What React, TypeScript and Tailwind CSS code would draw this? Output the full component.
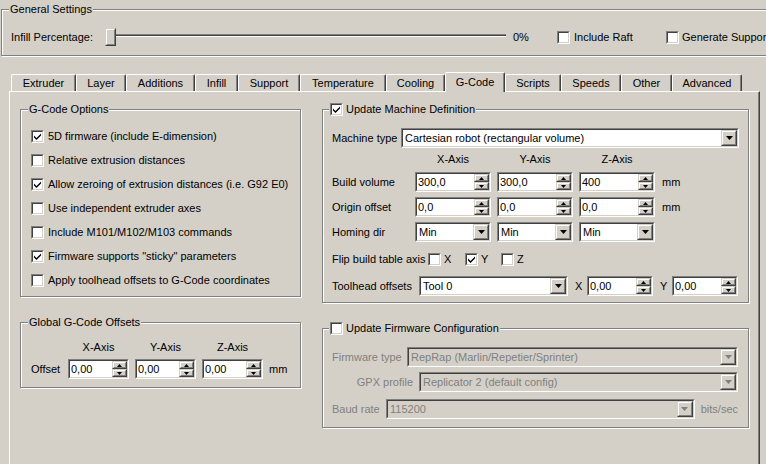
import React from 'react';

interface BoxProps {
  className?: string;
  inner?: string;
  children?: React.ReactNode;
}

function Sunken({ className = '', inner = 'bg-white', children }: BoxProps) {
  return (
    <div className={`border border-t-[#808080] border-l-[#808080] border-b-white border-r-white ${className}`}>
      <div className={`flex h-full w-full items-center border border-t-[#404040] border-l-[#404040] border-b-[#d4d0c8] border-r-[#d4d0c8] ${inner}`}>
        {children}
      </div>
    </div>
  );
}

function Raised({ className = '', children }: BoxProps) {
  return (
    <div className={`border border-t-[#d4d0c8] border-l-[#d4d0c8] border-b-[#404040] border-r-[#404040] ${className}`}>
      <div className="flex h-full w-full items-center justify-center overflow-hidden border border-t-white border-l-white border-b-[#808080] border-r-[#808080] bg-[#d4d0c8]">
        {children}
      </div>
    </div>
  );
}

function CheckBox({ checked = false }: { checked?: boolean }) {
  return (
    <Sunken className="h-[13px] w-[13px] shrink-0" inner="bg-white justify-center">
      {checked && (
        <svg width="7" height="7" viewBox="0 0 7 7">
          <path d="M0 2.5 L2.5 5 L7 0.5 L7 2.5 L2.5 7 L0 4.5 Z" fill="#000" />
        </svg>
      )}
    </Sunken>
  );
}

function Arrow({ up = false, color = '#000' }: { up?: boolean; color?: string }) {
  return up ? (
    <svg width="5" height="3" viewBox="0 0 5 3">
      <path d="M2.5 0 L5 3 L0 3 Z" fill={color} />
    </svg>
  ) : (
    <svg width="5" height="3" viewBox="0 0 5 3">
      <path d="M0 0 L5 0 L2.5 3 Z" fill={color} />
    </svg>
  );
}

function Spin({ value, className = '' }: { value: string; className?: string }) {
  return (
    <Sunken className={`h-[20px] shrink-0 ${className}`}>
      <span className="flex-1 pl-[1px]">{value}</span>
      <div className="flex h-full w-[15px] flex-col">
        <Raised className="min-h-0 flex-1">
          <Arrow up />
        </Raised>
        <Raised className="min-h-0 flex-1">
          <Arrow />
        </Raised>
      </div>
    </Sunken>
  );
}

function Combo({ value, className = '', disabled = false }: { value: string; className?: string; disabled?: boolean }) {
  return (
    <Sunken className={`h-[20px] ${className}`} inner={disabled ? 'bg-[#d4d0c8]' : 'bg-white'}>
      <span className={`flex-1 truncate pl-[2px] ${disabled ? 'text-[#808080]' : ''}`}>{value}</span>
      <Raised className="h-full w-[16px]">
        <svg width="7" height="4" viewBox="0 0 7 4">
          <path d="M0 0 L7 0 L3.5 4 Z" fill={disabled ? '#808080' : '#000'} />
        </svg>
      </Raised>
    </Sunken>
  );
}

function Group({ title, className = '', children }: { title: React.ReactNode; className?: string; children?: React.ReactNode }) {
  return (
    <div className={`relative border border-[#808080] shadow-[inset_1px_1px_0_#fff,1px_1px_0_#fff] ${className}`}>
      <div className="absolute -top-[8px] left-[7px] flex items-center gap-[3px] bg-[#d4d0c8] px-[1px] leading-[14px]">
        {title}
      </div>
      {children}
    </div>
  );
}

const tabs = [
  { label: 'Extruder', w: 'w-[65px]' },
  { label: 'Layer', w: 'w-[50px]' },
  { label: 'Additions', w: 'w-[69px]' },
  { label: 'Infill', w: 'w-[43px]' },
  { label: 'Support', w: 'w-[62px]' },
  { label: 'Temperature', w: 'w-[86px]' },
  { label: 'Cooling', w: 'w-[59px]' },
  { label: 'G-Code', w: 'w-[60px]', active: true },
  { label: 'Scripts', w: 'w-[56px]' },
  { label: 'Speeds', w: 'w-[60px]' },
  { label: 'Other', w: 'w-[51px]' },
  { label: 'Advanced', w: 'w-[70px]' },
];

const gcodeOptions = [
  { label: '5D firmware (include E-dimension)', checked: true },
  { label: 'Relative extrusion distances', checked: false },
  { label: 'Allow zeroing of extrusion distances (i.e. G92 E0)', checked: true },
  { label: 'Use independent extruder axes', checked: false },
  { label: 'Include M101/M102/M103 commands', checked: false },
  { label: 'Firmware supports "sticky" parameters', checked: true },
  { label: 'Apply toolhead offsets to G-Code coordinates', checked: false },
];

export default function App() {
  return (
    <div className="flex h-[464px] w-[766px] flex-col overflow-hidden bg-[#d4d0c8] pt-[9px] font-['Liberation_Sans',Arial,sans-serif] text-[11px] leading-[13px] text-black">
      {/* General settings */}
      <Group title="General Settings" className="ml-[1px] h-[47px] w-[800px] shrink-0">
        <div className="mt-[17px] flex h-[20px] items-center pl-[9px]">
          <span className="w-[94px]">Infill Percentage:</span>
          <div className="relative h-[18px] w-[401px]">
            <div className="absolute left-[2px] right-0 top-[6px] h-[3px] border-t border-b border-t-[#808080] border-b-white bg-[#404040]" />
            <Raised className="absolute left-0 top-0 h-[18px] w-[11px]" />
          </div>
          <span className="ml-[7px] w-[44px]">0%</span>
          <CheckBox />
          <span className="ml-[4px] w-[92px]">Include Raft</span>
          <CheckBox />
          <span className="ml-[3px] whitespace-nowrap">Generate Support</span>
        </div>
      </Group>

      {/* Tabs */}
      <div className="ml-[9px] mt-[16px] flex h-[19px] shrink-0 items-end pl-[2px]">
        {tabs.map((t) =>
          t.active ? (
            <div
              key={t.label}
              className={`${t.w} relative z-10 -mb-[1px] flex h-[20px] items-start justify-center rounded-t-[2px] border-t border-l border-r border-t-white border-l-white border-r-[#404040] bg-[#d4d0c8] pt-[3px] shadow-[inset_-1px_0_0_#808080]`}
            >
              {t.label}
            </div>
          ) : (
            <div
              key={t.label}
              className={`${t.w} flex h-[17px] items-center justify-center rounded-t-[2px] border-t border-l border-r border-t-white border-l-white border-r-[#404040] shadow-[inset_-1px_0_0_#808080]`}
            >
              {t.label}
            </div>
          )
        )}
      </div>

      <div className="ml-[9px] flex w-[751px] flex-1 border-t border-l border-r border-t-white border-l-white border-r-[#404040] pl-[10px] pt-[17px] shadow-[inset_-1px_0_0_#808080]">
        {/* Left column */}
        <div className="flex w-[281px] flex-col">
          <Group title="G-Code Options" className="h-[188px]">
            <div className="flex flex-col pl-[10px] pt-[14px]">
              {gcodeOptions.map((o) => (
                <div key={o.label} className="flex h-[24px] items-center gap-[4px]">
                  <CheckBox checked={o.checked} />
                  <span>{o.label}</span>
                </div>
              ))}
            </div>
          </Group>

          <Group title="Global G-Code Offsets" className="mt-[25px] h-[66px]">
            <div className="pl-[10px] pt-[17px]">
              <div className="flex h-[14px] items-center">
                <span className="w-[37px]" />
                <span className="w-[61px] text-center">X-Axis</span>
                <span className="ml-[6px] w-[61px] text-center">Y-Axis</span>
                <span className="ml-[6px] w-[61px] text-center">Z-Axis</span>
              </div>
              <div className="mt-[5px] flex h-[20px] items-center">
                <span className="w-[37px]">Offset</span>
                <Spin value="0,00" className="w-[61px]" />
                <Spin value="0,00" className="ml-[6px] w-[61px]" />
                <Spin value="0,00" className="ml-[6px] w-[61px]" />
                <span className="ml-[6px]">mm</span>
              </div>
            </div>
          </Group>
        </div>

        {/* Right column */}
        <div className="ml-[21px] flex w-[427px] flex-col">
          <Group
            title={
              <>
                <CheckBox checked />
                <span>Update Machine Definition</span>
              </>
            }
            className="h-[194px] [&>div:first-child]:left-[6px]"
          >
            <div className="flex flex-col pl-[9px] pr-[9px] pt-[18px]">
              <div className="flex h-[20px] items-center">
                <span className="w-[69px] shrink-0">Machine type</span>
                <Combo value="Cartesian robot (rectangular volume)" className="flex-1" />
              </div>
              <div className="mt-[4px] flex h-[14px] items-center">
                <span className="w-[83px]" />
                <span className="w-[76px] text-center">X-Axis</span>
                <span className="ml-[6px] w-[76px] text-center">Y-Axis</span>
                <span className="ml-[6px] w-[76px] text-center">Z-Axis</span>
              </div>
              <div className="mt-[6px] flex h-[20px] items-center">
                <span className="w-[83px]">Build volume</span>
                <Spin value="300,0" className="w-[76px]" />
                <Spin value="300,0" className="ml-[6px] w-[76px]" />
                <Spin value="400" className="ml-[6px] w-[76px]" />
                <span className="ml-[7px]">mm</span>
              </div>
              <div className="mt-[5px] flex h-[20px] items-center">
                <span className="w-[83px]">Origin offset</span>
                <Spin value="0,0" className="w-[76px]" />
                <Spin value="0,0" className="ml-[6px] w-[76px]" />
                <Spin value="0,0" className="ml-[6px] w-[76px]" />
                <span className="ml-[7px]">mm</span>
              </div>
              <div className="mt-[5px] flex h-[20px] items-center">
                <span className="w-[83px]">Homing dir</span>
                <Combo value="Min" className="w-[76px]" />
                <Combo value="Min" className="ml-[6px] w-[76px]" />
                <Combo value="Min" className="ml-[6px] w-[76px]" />
              </div>
              <div className="mt-[7px] flex h-[20px] items-center">
                <span className="w-[96px]">Flip build table axis</span>
                <div className="flex w-[37px] items-center gap-[3px]">
                  <CheckBox />
                  <span>X</span>
                </div>
                <div className="flex w-[36px] items-center gap-[3px]">
                  <CheckBox checked />
                  <span>Y</span>
                </div>
                <div className="flex items-center gap-[3px]">
                  <CheckBox />
                  <span>Z</span>
                </div>
              </div>
              <div className="mt-[7px] flex h-[20px] items-center">
                <span className="w-[87px]">Toolhead offsets</span>
                <Combo value="Tool 0" className="w-[149px]" />
                <span className="ml-[7px] w-[12px]">X</span>
                <Spin value="0,00" className="w-[66px]" />
                <span className="ml-[7px] w-[12px]">Y</span>
                <Spin value="0,00" className="w-[66px]" />
              </div>
            </div>
          </Group>

          <Group
            title={
              <>
                <CheckBox />
                <span>Update Firmware Configuration</span>
              </>
            }
            className="mt-[25px] h-[100px] [&>div:first-child]:left-[6px]"
          >
            <div className="flex flex-col pl-[9px] pr-[10px] pt-[18px] text-[#808080]">
              <div className="flex h-[20px] items-center">
                <span className="w-[75px] shrink-0">Firmware type</span>
                <Combo value="RepRap (Marlin/Repetier/Sprinter)" className="flex-1" disabled />
              </div>
              <div className="mt-[5px] flex h-[20px] items-center">
                <span className="w-[87px] shrink-0 pr-[6px] text-right">GPX profile</span>
                <Combo value="Replicator 2 (default config)" className="flex-1" disabled />
              </div>
              <div className="mt-[7px] flex h-[20px] items-center">
                <span className="w-[54px] shrink-0">Baud rate</span>
                <Combo value="115200" className="w-[309px]" disabled />
                <span className="ml-[6px]">bits/sec</span>
              </div>
            </div>
          </Group>
        </div>
      </div>
    </div>
  );
}
